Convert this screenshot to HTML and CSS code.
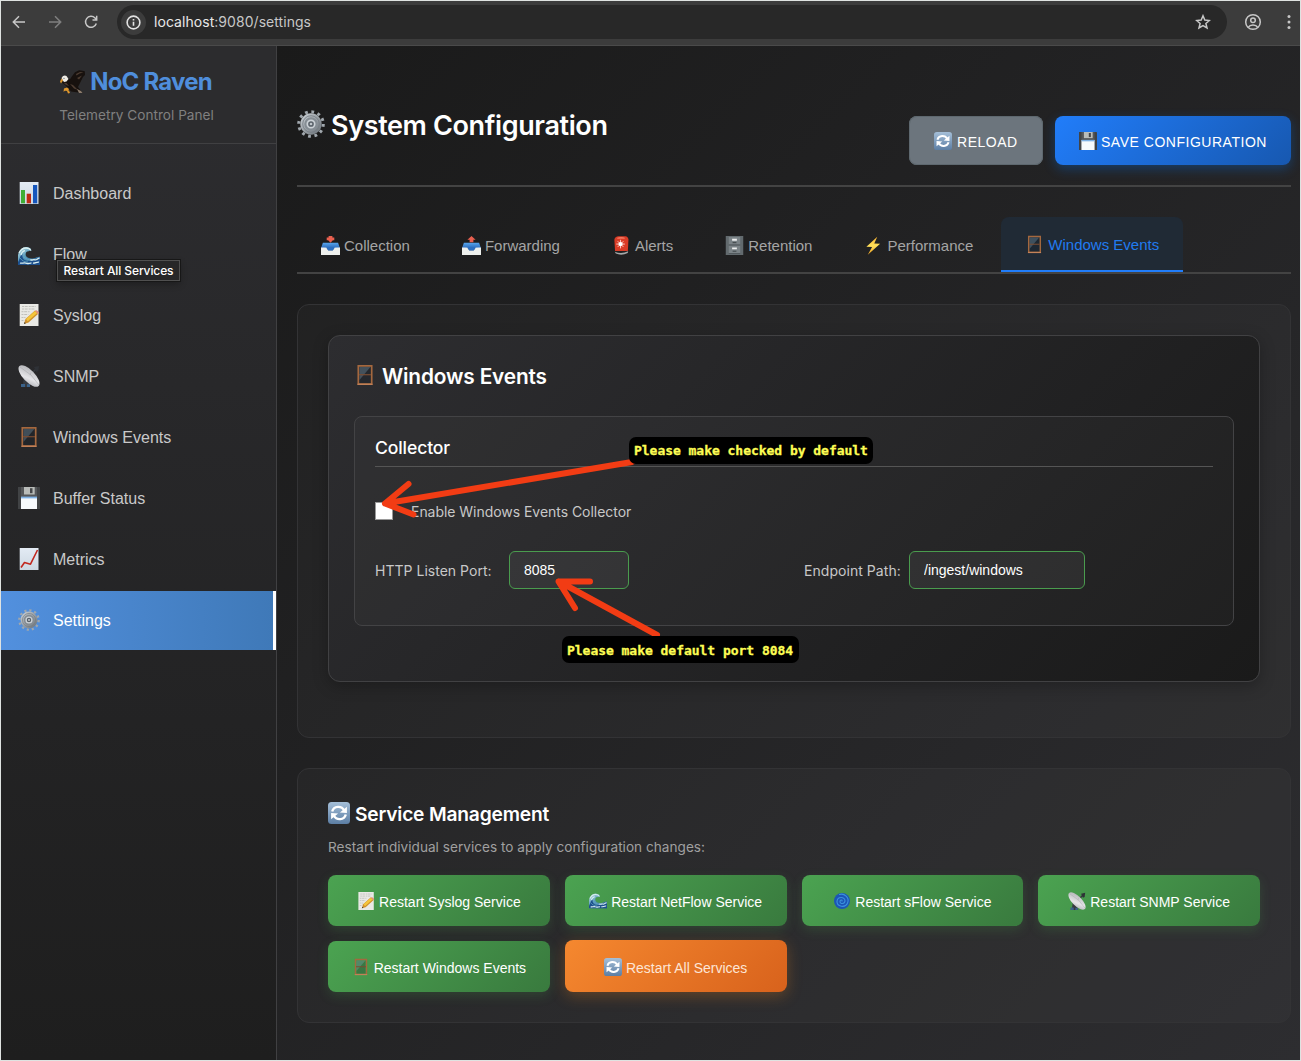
FILE: index.html
```html
<!DOCTYPE html>
<html lang="en">
<head>
<meta charset="utf-8">
<title>NoC Raven</title>
<link rel="stylesheet" href="styles.css">
</head>
<body>
<svg class="sprite" aria-hidden="true">
  <defs>
    <linearGradient id="g-paper" x2="0" y2="1"><stop stop-color="#e3ebf4"/><stop offset="1" stop-color="#cdd8e2"/></linearGradient>
    <linearGradient id="g-steel" x2="1" y2="1"><stop stop-color="#c5cbd0"/><stop offset="1" stop-color="#70777d"/></linearGradient>
    <linearGradient id="g-sync" x2="0" y2="1"><stop stop-color="#a5bfd8"/><stop offset="1" stop-color="#5c7ea4"/></linearGradient>
    <linearGradient id="g-tray" x2="0" y2="1"><stop stop-color="#58a6ee"/><stop offset="1" stop-color="#2867b8"/></linearGradient>
    <linearGradient id="g-dish" x2="1" y2="1"><stop stop-color="#a9aaae"/><stop offset=".6" stop-color="#e5e5e8"/><stop offset="1" stop-color="#a7a8ae"/></linearGradient>
    <linearGradient id="g-bolt" x2="0" y2="1"><stop stop-color="#ffb52e"/><stop offset=".5" stop-color="#ffe05a"/><stop offset="1" stop-color="#f0a020"/></linearGradient>
    <linearGradient id="g-wave" x2="1" y2="1"><stop stop-color="#cfe9ec"/><stop offset=".4" stop-color="#5b9dbd"/><stop offset="1" stop-color="#1d4f88"/></linearGradient>
  </defs>
  <symbol id="i-chart" viewBox="0 0 22 22"><path fill="url(#g-paper)" d="M1.7 0h18.800v22H1.700z"/><path fill="#3eae35" d="M3 8h4v13.300H3z"/><path fill="#bd2a14" d="M8.700 11.700H13v9.600H8.700z"/><path fill="#1556bd" d="M15 3h4.200v18.300H15z"/></symbol>
  <symbol id="i-wave" viewBox="0 0 22 22"><path fill="url(#g-wave)" d="M0 20V10C1.200 5 5 1.500 9 2c3 .3 4.500 2 4.300 4-1-.9-2-.6-2.400.3-2-.5-3.800 1.500-3.100 4.200 1.200 3 5.200 3.300 8 2.800 2-.6 4-1.800 6.200-1.600V20z"/><path fill="#1c4f8c" d="M0 17c2-3 1.500-6 4.500-8-1 5 3 7.500 7 7 4 .3 7-2 10.500-2v6H0z"/><path fill="none" stroke="#d9eff0" stroke-width="1.300" d="M1 8c1.500-3 4-5 7-5s4 1 4.800 2.500M3 10c.5-2 2-4 4-4.300M2 18c2 .8 4-.8 6 .2s4-.6 5.500 0M12 14.500c2 1.500 3-.6 5 .3 1.500.6 2.500-1.500 4.500-1.600M15 18c2 .5 4-1.400 6-.8"/><path fill="none" stroke="#65abc4" stroke-width=".8" d="M2 13c2 3 5 4 8 4M6 12c2 2 5 3 7 3"/></symbol>
  <symbol id="i-memo" viewBox="0 0 22 22"><path fill="#e9e9e5" d="M1.700 0h18.800v22H1.700z"/><path fill="none" stroke="#b5b5b0" stroke-width=".8" stroke-dasharray="2 .7 3 1" d="M4 2.500h14M4 5h13M3.500 7.700h8M3.500 10.500h7M3.500 13.500h4M3.500 16.500h3"/><path fill="#cf8f2b" d="m6 20 1.500-5L17 6.500l3 3.500L10.500 18.500z"/><path fill="#f5c63b" d="M8 15 17 7l2 2.300-9.300 8z"/><path fill="#e58d7c" d="M17 6.700q1.300-1 2.600.3t1.500 2L20 10z"/><path fill="#333" d="m6 20 .6-2 1.300 1.200z"/></symbol>
  <symbol id="i-dish" viewBox="0 0 22 22"><path fill="#363a40" d="M6 11 5 19l-1.500 3h9L10 15z"/><path fill="#3b6289" d="M3 19h4v3H3zm6 .3h3V22H9z"/><path stroke="#34373c" stroke-width="1.700" d="M12 10 19 3"/><path fill="#2e3136" d="m16 2 5-1-.7 5-2 1z"/><ellipse cx="11" cy="11" rx="13.800" ry="5.900" transform="rotate(46 11 11)" fill="url(#g-dish)"/><path fill="none" stroke="#a2a3a7" stroke-width=".5" d="m2 2 11 8 8 10M12 10l1-2.500"/></symbol>
  <symbol id="i-window" viewBox="0 0 22 22"><path fill="none" stroke="#a4683f" stroke-width="1.700" d="M4.300 1.800h13.400V20H4.300z"/><path fill="#5c7588" fill-opacity=".5" d="M5.500 3h11L5.500 16z"/><path fill="#17202a" fill-opacity=".28" d="M16.500 3v16h-11v-3z"/><path stroke="#7a4c32" stroke-width="1.200" d="M5 10.700h12"/><path stroke="#c58359" stroke-width="1.300" d="M3.400 20.300h15.200"/></symbol>
  <symbol id="i-floppy" viewBox="0 0 22 22"><path fill="#555759" d="M0 0h21l1 1v21H0z"/><path fill="#414345" d="M0 0h3v22H0zm19 0h2l1 1v21h-3z"/><path fill="#b9bcb9" d="M6 0h10.700v7.500H6z"/><path fill="#444648" d="M12 1.200h2.500v5H12z"/><path fill="#f7fafc" d="M3 10h16v12H3z"/><path fill="#7fb2e5" d="M3 9.600h16v1.800H3z"/></symbol>
  <symbol id="i-trend" viewBox="0 0 22 22"><path fill="url(#g-paper)" d="M1.700 0h18.800v22H1.700z"/><path fill="none" stroke="#c2281f" stroke-width="1.600" stroke-linejoin="round" d="m3 19.500 3.500-5 6 1.700L19.500 2"/></symbol>
  <symbol id="i-gear" viewBox="0 0 28 28"><circle cx="14" cy="14" r="12.300" fill="none" stroke="#a0a7ad" stroke-width="3" stroke-dasharray="2.800 3.640"/><circle cx="14" cy="14" r="8.700" fill="#858d94" stroke="url(#g-steel)" stroke-width="4"/><circle cx="14" cy="14" r="8.300" fill="none" stroke="#727a81" stroke-width=".8"/><circle cx="14" cy="14" r="3.700" fill="#596169" stroke="#ccd2d7" stroke-width="1.700"/><circle cx="14" cy="14" r="1.300" fill="#bfc5ca"/></symbol>
  <symbol id="i-tray" viewBox="0 0 20 20"><path fill="url(#g-tray)" d="M2 7h16l2 6H0z"/><path fill="#eef0ed" d="M0 12h5.700l2 3h4.600l2-3H20v8H0z"/><path fill="#2c6fc1" d="M3 12h14l-2.600.3-2 3H7.600l-2-3z"/></symbol>
  <symbol id="i-inbox" viewBox="0 0 20 20"><use href="#i-tray"/><path fill="#e9604f" d="M8 0h4v1.500h2v3h-1.500L10 7 7.500 4.500H6v-3h2z"/></symbol>
  <symbol id="i-outbox" viewBox="0 0 20 20"><use href="#i-tray"/><path fill="#e9604f" d="m10 0 4.300 4h-2.300v2.500H8V4H5.700z"/></symbol>
  <symbol id="i-alert" viewBox="0 0 20 20"><path fill="#d93b26" d="M2.500 4Q3 .5 7 .3h7q3 .3 3.300 3.500l-.6 12H3.200z"/><path fill="#f57961" d="M5 2q5-2 9 0l-1 1H6z"/><path stroke="#fbd0c8" stroke-width="1" d="M9 4v9M4.500 8.500h9M6 5.500l6 6M12 5.500l-6 6"/><circle cx="9" cy="8.500" r="2.200" fill="#fff"/><path fill="#a5a7a8" d="M3 16.500q7 3 14-.5l-.4 2Q10 21 4 18.500z"/></symbol>
  <symbol id="i-cabinet" viewBox="0 0 20 20"><path fill="#626a6e" d="M.8 0h18.400v20H.8z"/><path fill="#7b8387" d="M4 1h12v8H4zm0 9h12v8H4z"/><path fill="#52595d" d="M4 9h12v1H4zm0 9h12v1H4z"/><path fill="#eef0f0" d="M7.500 3h5v2h-5zm0 9h5v2h-5z"/><path stroke="#3b4144" d="M8 7h4m-4 9h4"/></symbol>
  <symbol id="i-bolt" viewBox="0 0 20 20"><path fill="url(#g-bolt)" d="M14 .7 2.500 11.300l6 .2L4 19.800 17 8.200l-6.200-.2z"/></symbol>
  <symbol id="i-sync" viewBox="0 0 22 22"><rect width="22" height="22" rx="3.500" fill="url(#g-sync)"/><path fill="none" stroke="#fff" stroke-width="2.400" d="M4.200 9.500C5.800 3.700 13.500 3.400 16.300 8.500M17.800 12.500C16.200 18.300 8.500 18.600 5.700 13.500"/><path fill="#fff" d="M18.900 4.700v6.300l-7-.6zM3.100 17.300V11l7 .6z"/></symbol>
  <symbol id="i-swirl" viewBox="0 0 18 18"><circle cx="9" cy="9" r="8" fill="#1c55b7"/><path fill="none" stroke="#3b93dc" stroke-width="1.100" stroke-linecap="round" d="M9 9c.5-1.500-2-1.500-2 .5 0 3 5 2.700 5-.7 0-4.300-7.500-4.500-8 .5-.2 5.500 8 7 10.500 2C17 5.500 11 1 6.500 2.500"/></symbol>
  <symbol id="i-eagle" viewBox="0 0 25 24"><path fill="#17110e" d="M24.800 1.300 21 .5l-2-.3-4 2-3 4-2 3L6 8l-5 3.500 4 3.500 3 3 3 3.500 11.500 1.500-4.500-6 2-4 3-6L25 5z"/><path fill="#4d3c31" d="m16 4 4-2 3.500.5-4 1-3 2zM17 8l5-2.500-3 4zM10 14l3 1 5 5-4-1.500zM3.500 12.500l3 .5 2.500 3-3-1z"/><path fill="#8b7b6c" d="m17 19 4 2 1.500 2H19z"/><path fill="#efede6" d="M1.500 8Q3.500 4.500 6.500 6L8.500 9 6.500 11.500l-2.500.5-1.500-2z"/><path fill="#e0982c" d="M1.500 8.500 0 11.500l1 2 2-3zM4 18.500l3-1 2 1.600-1 1.800-3-.2-1.500 1zM7 21l2-.5 1 2.500-2 .5z"/><circle cx="4" cy="8.300" r=".5" fill="#222"/></symbol>
</svg>

<div class="window">
  <header class="toolbar">
    <svg class="nav-back" viewBox="0 0 16 16"><path d="M14 8H2.500M8 2.300 2.300 8 8 13.700"/></svg>
    <svg class="nav-forward" viewBox="0 0 16 16"><path d="M2 8h11.500M8 2.300 13.700 8 8 13.700"/></svg>
    <svg class="nav-reload" viewBox="0 0 16 16"><path d="M13.300 9.500A5.500 5.500 0 1 1 12 4l1.500 1.600M13.700 1.800v4.200H9.500"/></svg>
    <div class="address">
      <span class="site-info"><svg viewBox="0 0 16 16"><circle cx="8" cy="8" r="6"/><path d="M8 7.300v3.700M8 4.700v1.500"/></svg></span>
      <span class="url"><b>localhost</b>:9080/settings</span>
      <svg class="star" viewBox="0 0 16 16"><path d="m8 1.800 1.800 4.300 4.600.4-3.500 3 1.100 4.500L8 11.600 4 14l1.100-4.500-3.500-3 4.600-.4z"/></svg>
    </div>
    <svg class="profile" viewBox="0 0 18 18"><circle cx="9" cy="9" r="7.300"/><circle cx="9" cy="7.300" r="2.300"/><path d="M4.200 14.300c2-3 7.600-3 9.600 0"/></svg>
    <svg class="more" viewBox="0 0 4 16"><circle cx="2" cy="2.400" r="1.500"/><circle cx="2" cy="8" r="1.500"/><circle cx="2" cy="13.600" r="1.500"/></svg>
  </header>

  <div class="app">
    <aside class="sidebar">
      <div class="brand">
        <h1><svg><use href="#i-eagle"/></svg><span>NoC Raven</span></h1>
        <p>Telemetry Control Panel</p>
      </div>
      <nav class="menu">
        <a><svg><use href="#i-chart"/></svg>Dashboard</a>
        <a><svg class="low"><use href="#i-wave"/></svg>Flow</a>
        <a><svg><use href="#i-memo"/></svg>Syslog</a>
        <a><svg><use href="#i-dish"/></svg>SNMP</a>
        <a><svg><use href="#i-window"/></svg>Windows Events</a>
        <a><svg><use href="#i-floppy"/></svg>Buffer Status</a>
        <a><svg><use href="#i-trend"/></svg>Metrics</a>
        <a class="active"><svg><use href="#i-gear"/></svg>Settings</a>
      </nav>
      <div class="tooltip">Restart All Services</div>
    </aside>

    <main class="content">
      <div class="page-head">
        <h2><svg><use href="#i-gear"/></svg><span>System Configuration</span></h2>
        <div class="actions">
          <button class="btn reload"><svg><use href="#i-sync"/></svg>RELOAD</button>
          <button class="btn save"><svg><use href="#i-floppy"/></svg>SAVE CONFIGURATION</button>
        </div>
      </div>

      <div class="tabs">
        <button><svg><use href="#i-inbox"/></svg>Collection</button>
        <button><svg><use href="#i-outbox"/></svg>Forwarding</button>
        <button><svg><use href="#i-alert"/></svg>Alerts</button>
        <button><svg><use href="#i-cabinet"/></svg>Retention</button>
        <button><svg><use href="#i-bolt"/></svg>Performance</button>
        <button class="active"><svg><use href="#i-window"/></svg>Windows Events</button>
      </div>

      <section class="panel config">
        <div class="card">
          <h3><svg><use href="#i-window"/></svg><span>Windows Events</span></h3>
          <div class="group">
            <h4>Collector</h4>
            <label class="check"><span class="box"></span><span class="check-text">Enable Windows Events Collector</span></label>
            <div class="fields">
              <label><span class="port-label">HTTP Listen Port:</span><input class="port" value="8085"></label>
              <label><span class="path-label">Endpoint Path:</span><input class="path" value="/ingest/windows"></label>
            </div>
          </div>
        </div>
      </section>

      <section class="panel services">
        <h3><svg><use href="#i-sync"/></svg><span>Service Management</span></h3>
        <p>Restart individual services to apply configuration changes:</p>
        <div class="service-grid">
          <button><svg><use href="#i-memo"/></svg>Restart Syslog Service</button>
          <button><svg><use href="#i-wave"/></svg>Restart NetFlow Service</button>
          <button><svg><use href="#i-swirl"/></svg>Restart sFlow Service</button>
          <button><svg><use href="#i-dish"/></svg>Restart SNMP Service</button>
          <button><svg><use href="#i-window"/></svg>Restart Windows Events</button>
          <button class="all"><svg><use href="#i-sync"/></svg>Restart All Services</button>
        </div>
      </section>
    </main>
  </div>

  <svg class="arrows" viewBox="0 0 1301 1061"><path d="M632 462 385 503.500M408.500 484 385 503.500l28.500 11M657 635 559 581.500M590 581.500h-31.500L575 608"/></svg>
  <div class="note note-check">Please make checked by default</div>
  <div class="note note-port">Please make default port 8084</div>
</div>
</body>
</html>
```
FILE: styles.css
```css
* { box-sizing: border-box; }
body { margin: 0; font-family: Inter, sans-serif; color: #fff; background: #1a1a1a; }
h1, h2, h3, h4, p { margin: 0; }
button, input { font-family: "Liberation Sans", Arial, sans-serif; }
svg { display: block; flex: none; }
.sprite { position: absolute; width: 0; height: 0; }

.window { position: relative; width: 1301px; height: 1061px; border: 1px solid #dfe3e1; overflow: hidden; display: flex; flex-direction: column; }

/* Browser toolbar */
.toolbar { height: 45px; flex: none; display: flex; align-items: center; background: #3c3c3c; border-bottom: 1px solid #4a4a4a; padding: 0 9px 2px 10px; }
.toolbar svg { width: 16px; height: 16px; fill: none; stroke: #c7c7c7; stroke-width: 1.5; }
.toolbar .nav-forward { margin-left: 20px; stroke: #7f7f7f; }
.toolbar .nav-reload { margin-left: 20px; }
.address { flex: 1; height: 34px; margin-left: 18px; padding: 0 16px 0 4px; border-radius: 17px; background: #282828; display: flex; align-items: center; }
.site-info { width: 25px; height: 25px; border-radius: 50%; background: #3c3c3c; display: flex; align-items: center; justify-content: center; }
.site-info svg { width: 17px; height: 17px; stroke: #e3e3e3; }
.url { margin-left: 8px; padding-bottom: 2px; font-size: 14px; letter-spacing: .05px; color: #c7c7c7; flex: 1; }
.url b { font-weight: 400; color: #e8e8e8; }
.toolbar .profile { width: 18px; height: 18px; margin-left: 17px; }
.toolbar .more { width: 4px; margin-left: 25px; fill: #c7c7c7; stroke: none; }

.app { flex: 1; display: flex; min-height: 0; }

/* Sidebar */
.sidebar { position: relative; width: 276px; flex: none; border-right: 1px solid #404042; background: linear-gradient(180deg, #2d2d30, #1e1e1e); }
.brand { height: 98px; border-bottom: 1px solid #404042; padding-top: 20px; text-align: center; background: #2c2c2e; }
.brand h1 { display: flex; justify-content: center; align-items: center; gap: 5px; height: 32px; font-size: 24px; line-height: 32px; font-weight: 700; letter-spacing: -.8px; color: #4f8edc; padding-right: 5px; }
.brand h1 svg { width: 25px; height: 24px; }
.brand p { margin-top: 7px; font-size: 13.6px; line-height: 20px; letter-spacing: .02px; color: #808080; padding-right: 4px; }
.menu { padding-top: 20px; display: flex; flex-direction: column; gap: 2px; }
.menu a { height: 59px; display: flex; align-items: center; padding-left: 17px; gap: 13px; font-family: "Liberation Sans", Arial, sans-serif; font-size: 16px; color: #c9c9c9; }
.menu svg { width: 22px; height: 22px; margin-bottom: 2px; }
.menu .low { margin-bottom: -2px; }
.menu .active { color: #fff; background: linear-gradient(90deg, #5290de, #3f79b8); border-right: 3px solid #fff; }
.tooltip { position: absolute; left: 56px; top: 214px; width: 123px; height: 21px; border: 1px solid #505050; outline: 1px solid #171717; background: #272728; font-size: 12px; line-height: 19px; font-weight: 500; letter-spacing: -.1px; text-align: center; white-space: nowrap; box-shadow: 0 3px 7px rgba(0,0,0,.3); }

/* Main column */
.content { flex: 1; padding: 50px 9px 0 20px; background: linear-gradient(135deg, #1a1a1a, #2d2d30); min-width: 0; }
.page-head { height: 91px; border-bottom: 2px solid #434343; display: flex; justify-content: space-between; padding-top: 20px; }
.page-head h2 { display: flex; align-items: center; gap: 6px; height: 18px; font-size: 27px; font-weight: 600; letter-spacing: -.38px; }
.page-head h2 svg { width: 28px; height: 28px; margin-top: -3px; }
.actions { display: flex; gap: 12px; }
.btn { height: 49px; display: flex; align-items: center; gap: 4px; padding: 2px 24px 0; border: 0; border-radius: 8px; color: #fff; font-size: 14px; letter-spacing: .52px; }
.btn svg { width: 18px; height: 18px; margin-top: -2px; }
.reload { width: 134px; padding-left: 25px; gap: 5px; background: #6c757d; box-shadow: inset 0 0 0 1px #5e686f; }
.save { width: 236px; background: linear-gradient(135deg, #217dfa, #1758b0); box-shadow: 0 4px 12px rgba(0,123,255,.3); white-space: nowrap; }

.tabs { height: 57px; margin-top: 30px; border-bottom: 2px solid #434343; display: flex; gap: 4px; }
.tabs button { height: 55px; display: flex; align-items: center; gap: 4px; padding: 2px 24px 0; border: 0; border-radius: 8px 8px 0 0; background: none; color: #a5a5a5; font-size: 15px; }
.tabs svg { width: 19px; height: 19px; }
.tabs .active { background: #202a35; color: #217bf0; border-bottom: 2px solid #217dfa; }

.panel { border: 1px solid #333335; border-radius: 12px; padding: 30px; background: rgba(255,255,255,.025); }
.config { margin-top: 30px; height: 434px; }
.card { height: 347px; padding: 25px; border: 1px solid #414143; border-radius: 12px; background: linear-gradient(135deg, #2d2d30, #1a1a1a); box-shadow: 0 4px 15px rgba(0,0,0,.25); }
.card h3, .services h3 { display: flex; align-items: center; font-size: 20.8px; line-height: 30px; height: 30px; font-weight: 600; letter-spacing: -.15px; }
.card h3 { gap: 6px; }
.card h3 svg, .services h3 svg { width: 22px; height: 22px; margin-top: -2px; }
.card h3 span { padding-top: 2px; }
.group { height: 210px; margin-top: 25px; padding: 20px; border: 1px solid #434345; border-radius: 8px; background: rgba(255,255,255,.025); }
.group h4 { height: 30px; border-bottom: 1px solid #555; font-size: 17.6px; line-height: 22px; font-weight: 500; letter-spacing: -.12px; }
.check { display: flex; align-items: center; height: 20px; margin-top: 34px; color: #c8c8c8; font-size: 14px; }
.box { width: 18px; height: 18px; border: 1px solid #999; background: #fff; }
.check-text { margin-left: 18px; padding-top: 1px; letter-spacing: -.04px; }
.fields { display: grid; grid-template-columns: 1fr 1fr; gap: 20px; margin-top: 30px; font-size: 14px; color: #c8c8c8; }
.fields label { display: flex; align-items: center; }
.fields span { padding-top: 1px; white-space: nowrap; }
.port-label { width: 134px; letter-spacing: .02px; }
.path-label { width: 105px; letter-spacing: .05px; }
.fields input { height: 38px; padding: 0 14px; border: 1px solid #4a9c4e; border-radius: 6px; background: rgba(255,255,255,.05); color: #fff; font-size: 14px; }
.fields .port { width: 120px; }
.fields .path { width: 176px; }

.services { margin-top: 30px; height: 255px; }
.services h3 { gap: 5px; font-size: 19.2px; letter-spacing: -.18px; }
.services p { margin-top: 9px; font-size: 13.6px; line-height: 18px; color: #a0a0a0; letter-spacing: .02px; }
.service-grid { margin-top: 19px; display: grid; grid-template-columns: repeat(4, 1fr); gap: 15px; }
.service-grid button { height: 51px; display: flex; align-items: center; justify-content: center; gap: 4px; padding: 3px 0 0; border: 0; border-radius: 8px; color: #fff; font-size: 14px; background: linear-gradient(135deg, #4ba351, #397a3e); box-shadow: 0 4px 12px rgba(76,175,80,.2); }
.service-grid svg { width: 18px; height: 18px; margin-top: -2px; }
.service-grid .all { height: 52px; margin-top: -1px; color: #fde5d5; background: linear-gradient(135deg, #f5882f, #d8621c); box-shadow: 0 4px 15px rgba(255,140,30,.27); }

/* Annotations laid over the page */
.arrows { position: absolute; left: -1px; top: -1px; width: 1301px; height: 1061px; fill: none; stroke: #f23c14; stroke-width: 6; stroke-linecap: round; stroke-linejoin: round; }
.note { position: absolute; height: 27px; padding: 0 5px; border-radius: 7px; background: #000; color: #fdfd54; font: bold 13px/27px "DejaVu Sans Mono", monospace; letter-spacing: -.03px; white-space: nowrap; -webkit-text-stroke: .3px #fdfd54; }
.note-check { left: 628px; top: 436px; width: 244px; }
.note-port { left: 561px; top: 635px; width: 237px; line-height: 29px; }
```
